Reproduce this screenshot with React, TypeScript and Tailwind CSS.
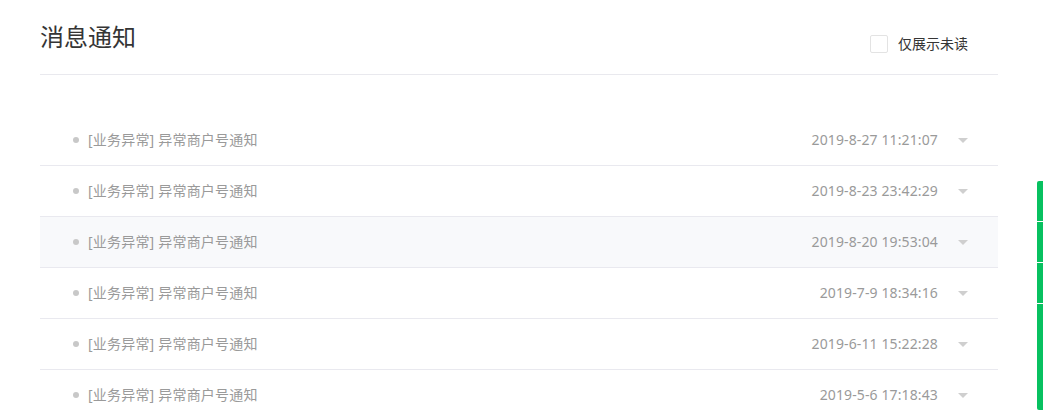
import React from 'react';

const notices = [
  { id: 1, title: '[业务异常] 异常商户号通知', time: '2019-8-27 11:21:07' },
  { id: 2, title: '[业务异常] 异常商户号通知', time: '2019-8-23 23:42:29' },
  { id: 3, title: '[业务异常] 异常商户号通知', time: '2019-8-20 19:53:04', hover: true },
  { id: 4, title: '[业务异常] 异常商户号通知', time: '2019-7-9 18:34:16' },
  { id: 5, title: '[业务异常] 异常商户号通知', time: '2019-6-11 15:22:28' },
  { id: 6, title: '[业务异常] 异常商户号通知', time: '2019-5-6 17:18:43' },
];

const font = { fontFamily: '"Noto Sans", "Noto Sans CJK SC", sans-serif' };

const App: React.FC = () => {
  return (
    <div className="relative h-[420px] w-[1043px] overflow-hidden bg-white" style={font}>
      <div className="ml-[40px] w-[958px]">
        {/* header */}
        <div className="flex h-[75px] items-start justify-between border-b border-[#e9e9ee]">
          <h1 className="mt-[21px] text-[24px] leading-[32px] font-normal text-[#353535]">消息通知</h1>
          <label className="mt-[35px] mr-[30px] flex h-[18px] items-center gap-[10px]">
            <span className="h-[18px] w-[18px] rounded-[2px] border border-[#e3e3e3] bg-white" />
            <span className="text-[14px] leading-[18px] text-[#353535]">仅展示未读</span>
          </label>
        </div>

        {/* list */}
        <ul className="mt-[40px]">
          {notices.map((n) => (
            <li
              key={n.id}
              className={`flex h-[51px] items-center border-b border-[#e9e9ef] pr-[30px] pl-[33px] ${
                n.hover ? 'bg-[#f8f9fb]' : ''
              }`}
            >
              <span className="h-[6px] w-[6px] rounded-full bg-[#c8c8c8]" />
              <span className="ml-[9px] text-[14px] leading-[20px] tracking-[0.2px] text-[#9a9a9a]">{n.title}</span>
              <span className="ml-auto text-[14px] leading-[20px] tracking-[0.12px] text-[#9a9a9a]">{n.time}</span>
              <svg width="10" height="5" viewBox="0 0 10 5" className="ml-[20px]">
                <path d="M0 0h10L5 5z" fill="#cfcfcf" />
              </svg>
            </li>
          ))}
        </ul>
      </div>

      {/* side tabs */}
      <div className="absolute top-[181px] right-0 flex w-[6px] flex-col gap-[1px]">
        <div className="h-[40px] rounded-tl-[2px] bg-[#07c160]" />
        <div className="h-[40px] bg-[#07c160]" />
        <div className="h-[40px] bg-[#07c160]" />
        <div className="h-[106px] rounded-bl-[2px] bg-[#07c160]" />
      </div>
    </div>
  );
};

export default App;
